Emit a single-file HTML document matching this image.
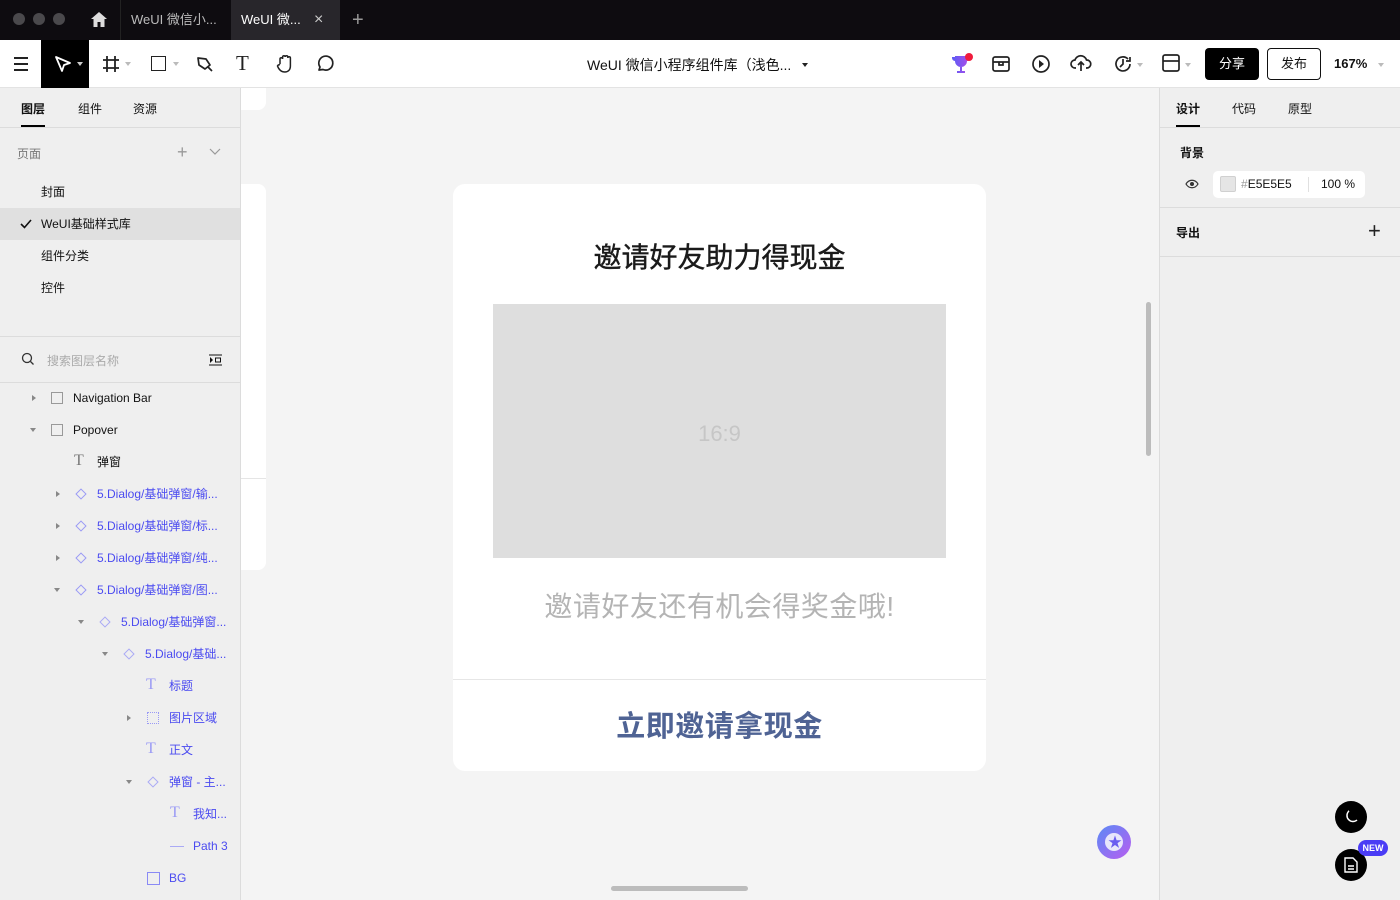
<!DOCTYPE html>
<html><head><meta charset="utf-8"><style>
*{margin:0;padding:0;box-sizing:border-box}
body{width:1400px;height:900px;overflow:hidden;background:#f4f4f4;font-family:"Liberation Sans","Noto Sans CJK SC",sans-serif;position:relative;color:#111}
.a{position:absolute}
.tabbar{left:0;top:0;width:1400px;height:40px;background:#0e0c10}
.dot{top:13px;width:12px;height:12px;border-radius:50%;background:#4a494c}
.tb{top:0;height:40px;color:#bbb;font-size:13px;line-height:40px}
.toolbar{left:0;top:40px;width:1400px;height:48px;background:#fff;border-bottom:1px solid #e3e3e3}
.lp{left:0;top:88px;width:241px;height:812px;background:#efefef;border-right:1px solid #dcdcdc}
.rp{left:1159px;top:88px;width:241px;height:812px;background:#efefef;border-left:1px solid #dcdcdc}
.t13{font-size:12px}
.row{left:0;width:240px;height:32px;line-height:32px;font-size:12px}
.blue{color:#4b4bf0}
.tri{width:0;height:0;border-left:3px solid transparent;border-right:3px solid transparent;border-top:4px solid #888}
.trr{width:0;height:0;border-top:3px solid transparent;border-bottom:3px solid transparent;border-left:4px solid #888}
</style></head><body>
<div class="a tabbar">
 <div class="a dot" style="left:13px"></div><div class="a dot" style="left:33px"></div><div class="a dot" style="left:53px"></div>
 <svg class="a" style="left:90px;top:11px" width="18" height="17" viewBox="0 0 18 17"><path d="M9 1L1 8h2.5v8h4v-5h3v5h4V8H17z" fill="#ddd"/></svg>
 <div class="a" style="left:120px;top:0;width:1px;height:40px;background:#222"></div>
 <div class="a tb" style="left:131px">WeUI 微信小...</div>
 <div class="a" style="left:231px;top:0;width:109px;height:40px;background:#28262b"></div>
 <div class="a tb" style="left:241px;color:#fff">WeUI 微...</div>
 <div class="a tb" style="left:314px;color:#ccc;font-size:16px">×</div>
 <div class="a tb" style="left:352px;color:#999;font-size:20px">+</div>
</div>
<div class="a toolbar">
 <div class="a" style="left:14px;top:17px;width:14px;height:2px;background:#222;box-shadow:0 6px 0 #222,0 12px 0 #222"></div>
 <div class="a" style="left:41px;top:0;width:48px;height:48px;background:#000"></div>
 <svg class="a" style="left:54px;top:15px" width="18" height="18" viewBox="0 0 18 18"><path d="M2 2l14 6-6 2-2 6z" fill="none" stroke="#fff" stroke-width="1.8" stroke-linejoin="round"/></svg>
 <div class="a tri" style="left:77px;top:22px;border-top-color:#ccc"></div>
 <svg class="a" style="left:102px;top:15px" width="18" height="18" viewBox="0 0 18 18"><path d="M5 1v16M13 1v16M1 5h16M1 13h16" stroke="#222" stroke-width="1.8"/></svg>
 <div class="a tri" style="left:125px;top:22px;border-top-color:#bbb"></div>
 <div class="a" style="left:151px;top:16px;width:15px;height:15px;border:1.8px solid #222"></div>
 <div class="a tri" style="left:173px;top:22px;border-top-color:#bbb"></div>
 <svg class="a" style="left:196px;top:15px" width="18" height="18" viewBox="0 0 18 18"><path d="M2 3l8 1 4 6-5 4-6-4z M12 12l4 4" fill="none" stroke="#222" stroke-width="1.7" stroke-linejoin="round"/></svg>
 <div class="a" style="left:236px;top:11px;font-size:21px;font-family:'Liberation Serif',serif;color:#222">T</div>
 <svg class="a" style="left:276px;top:14px" width="18" height="19" viewBox="0 0 18 19"><path d="M4 10V5a1.3 1.3 0 012.6 0V3a1.3 1.3 0 012.6 0v0a1.3 1.3 0 012.6 0v1a1.3 1.3 0 012.6 0v8c0 4-2.5 6-5.5 6S3 16 1.5 12c0 0 1-2 2.5-1" fill="none" stroke="#222" stroke-width="1.5"/></svg>
 <svg class="a" style="left:315px;top:14px" width="20" height="20" viewBox="0 0 20 20"><path d="M4 16l1-3a7 7 0 113 2.5z" fill="none" stroke="#222" stroke-width="1.7" stroke-linejoin="round"/></svg>
 <div class="a" style="left:587px;top:15px;font-size:14px;color:#111">WeUI 微信小程序组件库（浅色...</div>
 <div class="a tri" style="left:802px;top:23px;border-top-color:#222"></div>
 <svg class="a" style="left:950px;top:12px" width="24" height="24" viewBox="0 0 24 24"><defs><linearGradient id="g" x1="0" x2="1"><stop offset="0" stop-color="#5b5cf5"/><stop offset="1" stop-color="#b04de8"/></linearGradient></defs><path d="M5 4h12v5a6 6 0 01-12 0zM2 5h3v4a3 3 0 01-3-3zM17 5h3v1a3 3 0 01-3 3zM10 15h2v4h3v2H7v-2h3z" fill="url(#g)"/><circle cx="19" cy="5" r="4" fill="#f01b3c"/></svg>
 <svg class="a" style="left:991px;top:14px" width="20" height="20" viewBox="0 0 20 20"><rect x="2" y="3" width="16" height="14" rx="2" fill="none" stroke="#222" stroke-width="1.7"/><path d="M2 8h16M8 8v3h4V8" fill="none" stroke="#222" stroke-width="1.7"/></svg>
 <svg class="a" style="left:1031px;top:14px" width="20" height="20" viewBox="0 0 20 20"><circle cx="10" cy="10" r="8" fill="none" stroke="#222" stroke-width="1.7"/><path d="M8 6l5 4-5 4z" fill="#222"/></svg>
 <svg class="a" style="left:1070px;top:13px" width="22" height="20" viewBox="0 0 22 20"><path d="M6 15H5a4 4 0 010-8 6 6 0 0111.5 0 4 4 0 01.5 8h-1M11 18V9M8 12l3-3 3 3" fill="none" stroke="#222" stroke-width="1.7"/></svg>
 <svg class="a" style="left:1113px;top:14px" width="20" height="20" viewBox="0 0 20 20"><path d="M17 10a7 7 0 11-2-5M10 5v5l-3 3M17 3v4h-4" fill="none" stroke="#222" stroke-width="1.7"/></svg>
 <div class="a tri" style="left:1137px;top:23px;border-top-color:#bbb"></div>
 <svg class="a" style="left:1162px;top:14px" width="18" height="18" viewBox="0 0 18 18"><rect x="1" y="1" width="16" height="16" rx="2" fill="none" stroke="#222" stroke-width="1.7"/><path d="M1 7h16" stroke="#222" stroke-width="1.7"/></svg>
 <div class="a tri" style="left:1185px;top:23px;border-top-color:#bbb"></div>
 <div class="a" style="left:1205px;top:8px;width:54px;height:32px;background:#000;border-radius:4px;color:#fff;font-size:13px;text-align:center;line-height:32px">分享</div>
 <div class="a" style="left:1267px;top:8px;width:54px;height:32px;border:1px solid #111;border-radius:4px;font-size:13px;text-align:center;line-height:30px">发布</div>
 <div class="a" style="left:1334px;top:16px;font-size:13px;font-weight:bold">167%</div>
 <div class="a tri" style="left:1378px;top:23px;border-top-color:#bbb"></div>
</div>

<div class="a lp">
 <div class="a t13" style="left:21px;top:12px;font-weight:bold">图层</div>
 <div class="a" style="left:21px;top:37px;width:24px;height:3px;background:#000"></div>
 <div class="a t13" style="left:78px;top:12px">组件</div>
 <div class="a t13" style="left:133px;top:12px">资源</div>
 <div class="a" style="left:0;top:39px;width:240px;height:1px;background:#dcdcdc"></div>
 <div class="a t13" style="left:17px;top:57px;color:#777">页面</div>
 <div class="a" style="left:177px;top:57px;color:#999;font-size:18px;line-height:14px">+</div>
 <svg class="a" style="left:209px;top:60px" width="12" height="8"><path d="M1 1l5 5 5-5" fill="none" stroke="#999" stroke-width="1.2"/></svg>
 <div class="a row" style="top:88px;padding-left:41px">封面</div>
 <div class="a row" style="top:120px;padding-left:41px;background:#e0e0e0">WeUI基础样式库</div>
 <svg class="a" style="left:20px;top:131px" width="12" height="10"><path d="M1 5l3.5 3.5L11 1" fill="none" stroke="#111" stroke-width="1.6"/></svg>
 <div class="a row" style="top:152px;padding-left:41px">组件分类</div>
 <div class="a row" style="top:184px;padding-left:41px">控件</div>
 <div class="a" style="left:0;top:248px;width:240px;height:1px;background:#dcdcdc"></div>
 <svg class="a" style="left:21px;top:264px" width="14" height="14"><circle cx="6" cy="6" r="4.5" fill="none" stroke="#333" stroke-width="1.3"/><path d="M9.5 9.5l3 3" stroke="#333" stroke-width="1.3"/></svg>
 <div class="a t13" style="left:47px;top:264px;color:#aaa">搜索图层名称</div>
 <svg class="a" style="left:209px;top:266px" width="13" height="12"><path d="M0 1h13M0 11h13" stroke="#111"/><path d="M1 3l3 3-3 3z" fill="#111"/><rect x="6.5" y="4" width="5" height="4" fill="none" stroke="#111"/></svg>
 <div class="a" style="left:0;top:294px;width:240px;height:1px;background:#dcdcdc"></div>

 <div class="a trr" style="left:32px;top:307px"></div>
 <div class="a" style="left:51px;top:304px;width:12px;height:12px;border:1px dotted #777;outline:1px solid #999;outline-offset:-1px"></div>
 <div class="a row" style="top:294px;padding-left:73px">Navigation Bar</div>
 <div class="a tri" style="left:30px;top:340px"></div>
 <div class="a" style="left:51px;top:336px;width:12px;height:12px;border:1px solid #999"></div>
 <div class="a row" style="top:326px;padding-left:73px">Popover</div>
 <div class="a" style="left:74px;top:364px;font-family:'Liberation Serif',serif;font-size:16px;color:#777">T</div>
 <div class="a row" style="top:358px;padding-left:97px">弹窗</div>

 <div class="a trr" style="left:56px;top:403px"></div><div class="a" style="left:77px;top:402px;width:8px;height:8px;border:1.3px solid #9a9af5;transform:rotate(45deg)"></div>
 <div class="a row blue" style="top:390px;padding-left:97px">5.Dialog/基础弹窗/输...</div>
 <div class="a trr" style="left:56px;top:435px"></div><div class="a" style="left:77px;top:434px;width:8px;height:8px;border:1.3px solid #9a9af5;transform:rotate(45deg)"></div>
 <div class="a row blue" style="top:422px;padding-left:97px">5.Dialog/基础弹窗/标...</div>
 <div class="a trr" style="left:56px;top:467px"></div><div class="a" style="left:77px;top:466px;width:8px;height:8px;border:1.3px solid #9a9af5;transform:rotate(45deg)"></div>
 <div class="a row blue" style="top:454px;padding-left:97px">5.Dialog/基础弹窗/纯...</div>
 <div class="a tri" style="left:54px;top:500px"></div><div class="a" style="left:77px;top:498px;width:8px;height:8px;border:1.3px solid #9a9af5;transform:rotate(45deg)"></div>
 <div class="a row blue" style="top:486px;padding-left:97px">5.Dialog/基础弹窗/图...</div>
 <div class="a tri" style="left:78px;top:532px"></div><div class="a" style="left:101px;top:530px;width:8px;height:8px;border:1px solid #aaaaf5;transform:rotate(45deg)"></div>
 <div class="a row blue" style="top:518px;padding-left:121px">5.Dialog/基础弹窗...</div>
 <div class="a tri" style="left:102px;top:564px"></div><div class="a" style="left:125px;top:562px;width:8px;height:8px;border:1px solid #aaaaf5;transform:rotate(45deg)"></div>
 <div class="a row blue" style="top:550px;padding-left:145px">5.Dialog/基础...</div>
 <div class="a" style="left:146px;top:588px;font-family:'Liberation Serif',serif;font-size:16px;color:#9a9af5">T</div>
 <div class="a row blue" style="top:582px;padding-left:169px">标题</div>
 <div class="a trr" style="left:127px;top:627px"></div><div class="a" style="left:147px;top:624px;width:12px;height:12px;border:1px dotted #9a9af5"></div>
 <div class="a row blue" style="top:614px;padding-left:169px">图片区域</div>
 <div class="a" style="left:146px;top:652px;font-family:'Liberation Serif',serif;font-size:16px;color:#9a9af5">T</div>
 <div class="a row blue" style="top:646px;padding-left:169px">正文</div>
 <div class="a tri" style="left:126px;top:692px"></div><div class="a" style="left:149px;top:690px;width:8px;height:8px;border:1px solid #aaaaf5;transform:rotate(45deg)"></div>
 <div class="a row blue" style="top:678px;padding-left:169px">弹窗 - 主...</div>
 <div class="a" style="left:170px;top:716px;font-family:'Liberation Serif',serif;font-size:16px;color:#9a9af5">T</div>
 <div class="a row blue" style="top:710px;padding-left:193px">我知...</div>
 <div class="a" style="left:170px;top:758px;width:14px;height:1px;background:#aaaaf5"></div>
 <div class="a row blue" style="top:742px;padding-left:193px">Path 3</div>
 <div class="a" style="left:147px;top:784px;width:13px;height:13px;border:1.4px solid #8a8af5"></div>
 <div class="a row blue" style="top:774px;padding-left:169px">BG</div>
</div>

<!-- canvas -->
<div class="a" style="left:241px;top:88px;width:25px;height:22px;background:#fff;border-radius:0 0 8px 0"></div>
<div class="a" style="left:241px;top:184px;width:25px;height:386px;background:#fff;border-radius:0 8px 8px 0"></div>
<div class="a" style="left:241px;top:478px;width:25px;height:1px;background:#e5e5e5"></div>
<div class="a" style="left:453px;top:184px;width:533px;height:587px;background:#fff;border-radius:12px">
 <div class="a" style="left:0;top:52px;width:533px;text-align:center;font-size:28px;color:#1a1a1a;-webkit-text-stroke:0.4px #1a1a1a">邀请好友助力得现金</div>
 <div class="a" style="left:40px;top:120px;width:453px;height:254px;background:#dedede"></div>
 <div class="a" style="left:40px;top:237px;width:453px;text-align:center;font-size:22px;color:#c6c6c6">16:9</div>
 <div class="a" style="left:0;top:401px;width:533px;text-align:center;font-size:28px;color:#b4b4b4;letter-spacing:0.5px">邀请好友还有机会得奖金哦!</div>
 <div class="a" style="left:0;top:495px;width:533px;height:1px;background:#e6e6e6"></div>
 <div class="a" style="left:0;top:519px;width:533px;text-align:center;font-size:29px;color:#4f6394;font-weight:bold;letter-spacing:0.5px">立即邀请拿现金</div>
</div>
<div class="a" style="left:1146px;top:302px;width:5px;height:154px;background:#bcbcbc;border-radius:3px"></div>
<div class="a" style="left:611px;top:886px;width:137px;height:5px;background:#bcbcbc;border-radius:3px"></div>
<div class="a" style="left:1097px;top:825px;width:34px;height:34px;border-radius:50%;background:linear-gradient(135deg,#5b8af5,#b85ef0)"></div>
<div class="a" style="left:1105px;top:833px;width:18px;height:18px;border-radius:50%;background:#e8e6fb"></div>
<div class="a" style="left:1108px;top:832px;color:#6a5cf0;font-size:14px">★</div>

<div class="a rp">
 <div class="a t13" style="left:16px;top:12px;font-weight:bold">设计</div>
 <div class="a" style="left:16px;top:37px;width:24px;height:3px;background:#000"></div>
 <div class="a t13" style="left:72px;top:12px">代码</div>
 <div class="a t13" style="left:128px;top:12px">原型</div>
 <div class="a" style="left:0;top:39px;width:241px;height:1px;background:#dcdcdc"></div>
 <div class="a t13" style="left:20px;top:56px;font-weight:bold">背景</div>
 <svg class="a" style="left:25px;top:91px" width="14" height="10"><path d="M1 5c3-5 9-5 12 0-3 5-9 5-12 0z" fill="none" stroke="#333" stroke-width="1.2"/><circle cx="7" cy="5" r="2" fill="#333"/></svg>
 <div class="a" style="left:53px;top:83px;width:152px;height:27px;background:#fff;border-radius:5px"></div>
 <div class="a" style="left:60px;top:88px;width:16px;height:16px;background:#e5e5e5;border:1px solid #d0d0d0;border-radius:2px"></div>
 <div class="a t13" style="left:81px;top:89px"><span style="color:#999">#</span>E5E5E5</div>
 <div class="a" style="left:148px;top:89px;width:1px;height:15px;background:#e0e0e0"></div>
 <div class="a t13" style="left:161px;top:89px">100 %</div>
 <div class="a" style="left:0;top:119px;width:241px;height:1px;background:#dcdcdc"></div>
 <div class="a t13" style="left:16px;top:136px;font-weight:bold">导出</div>
 <div class="a" style="left:208px;top:130px;font-size:22px;font-weight:300;color:#222">+</div>
 <div class="a" style="left:0;top:168px;width:241px;height:1px;background:#dcdcdc"></div>
 <div class="a" style="left:175px;top:713px;width:32px;height:32px;border-radius:50%;background:#000"></div>
 <svg class="a" style="left:182px;top:720px" width="18" height="18"><path d="M7 3a6 6 0 108 9 6 6 0 01-8-9z" fill="none" stroke="#fff" stroke-width="1.5"/></svg>
 <div class="a" style="left:175px;top:761px;width:32px;height:32px;border-radius:50%;background:#000"></div>
 <svg class="a" style="left:184px;top:768px" width="14" height="18"><path d="M1 2h8l4 4v10H1z M4 10h6M4 13h6" fill="none" stroke="#fff" stroke-width="1.4"/></svg>
 <div class="a" style="left:198px;top:752px;width:30px;height:16px;border-radius:8px;background:#4a3cf5;color:#fff;font-size:9px;font-weight:bold;text-align:center;line-height:16px">NEW</div>
</div>
</body></html>
